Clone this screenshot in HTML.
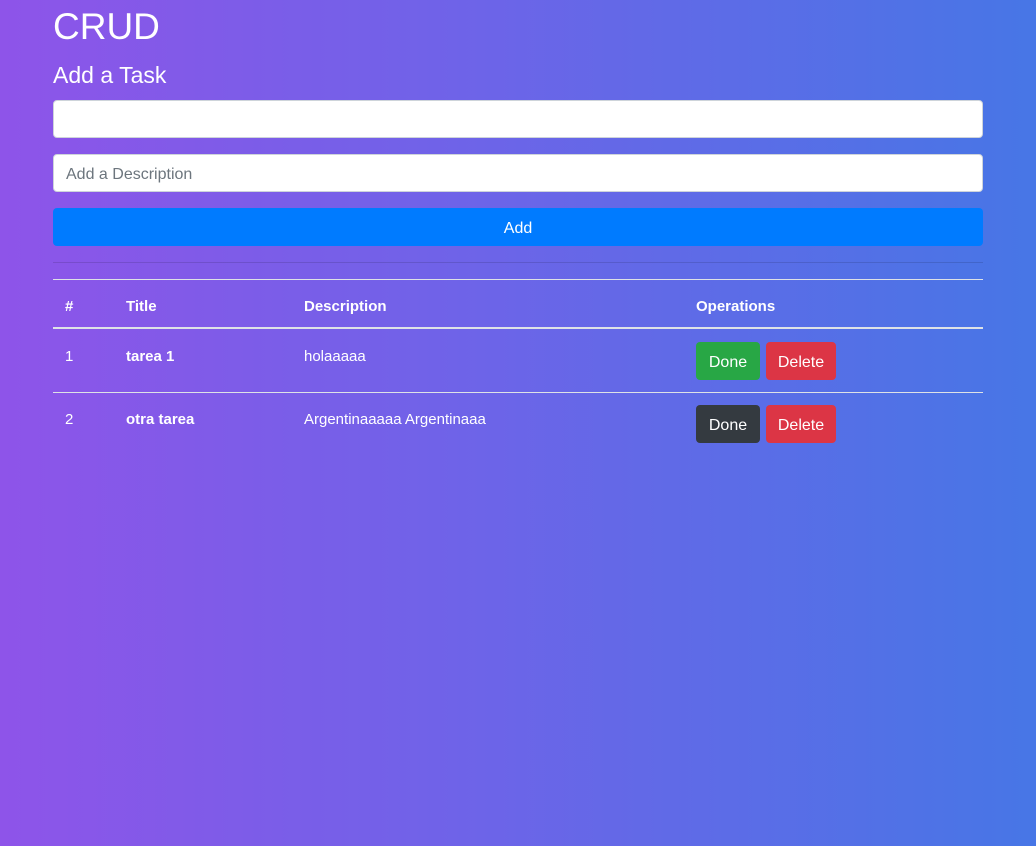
<!DOCTYPE html>
<html><head><style>
*{box-sizing:border-box}
body{margin:0;width:1036px;height:846px;background:linear-gradient(to right,#8e54e9,#4776e6);font-family:"Liberation Sans",sans-serif;color:#fff;font-size:16px}
.c{position:absolute;left:53px;width:930px}
.a{position:absolute;line-height:20px;font-size:15px;white-space:nowrap}
h1{position:absolute;left:53px;top:3px;margin:0;font-size:37px;font-weight:400;line-height:48px}
h2{position:absolute;left:53px;top:61px;margin:0;font-size:23px;font-weight:400;line-height:29px}
.in{height:38px;background:#fff;border:1px solid #ced4da;border-radius:4px;color:#6c757d;padding:10px 12px 0;font-size:16px;line-height:20px}
.btn{position:absolute;border-radius:4px;height:38px;line-height:41px;color:#fff;font-size:16px;text-align:center}
b{font-weight:700}
</style></head><body>
<h1>CRUD</h1>
<h2>Add a Task</h2>
<div class="c in" style="top:100px"></div>
<div class="c in" style="top:154px">Add a Description</div>
<div class="c btn" style="top:208px;background:#007bff">Add</div>
<div class="c" style="top:262px;border-top:1px solid rgba(0,0,0,.12)"></div>
<div class="c" style="top:279px;border-top:1px solid #dee2e6"></div>
<div class="c" style="top:327px;border-top:2px solid #dee2e6"></div>
<div class="c" style="top:392px;border-top:1px solid #dee2e6"></div>
<b class="a" style="left:65px;top:297px">#</b>
<b class="a" style="left:126px;top:297px">Title</b>
<b class="a" style="left:304px;top:297px">Description</b>
<b class="a" style="left:696px;top:297px">Operations</b>
<span class="a" style="left:65px;top:347px">1</span>
<b class="a" style="left:126px;top:347px">tarea 1</b>
<span class="a" style="left:304px;top:347px">holaaaaa</span>
<span class="a" style="left:65px;top:410px">2</span>
<b class="a" style="left:126px;top:410px">otra tarea</b>
<span class="a" style="left:304px;top:410px">Argentinaaaaa Argentinaaa</span>
<div class="btn" style="left:696px;top:342px;width:64px;background:#28a745">Done</div>
<div class="btn" style="left:766px;top:342px;width:70px;background:#dc3545">Delete</div>
<div class="btn" style="left:696px;top:405px;width:64px;background:#343a40">Done</div>
<div class="btn" style="left:766px;top:405px;width:70px;background:#dc3545">Delete</div>
</body></html>
